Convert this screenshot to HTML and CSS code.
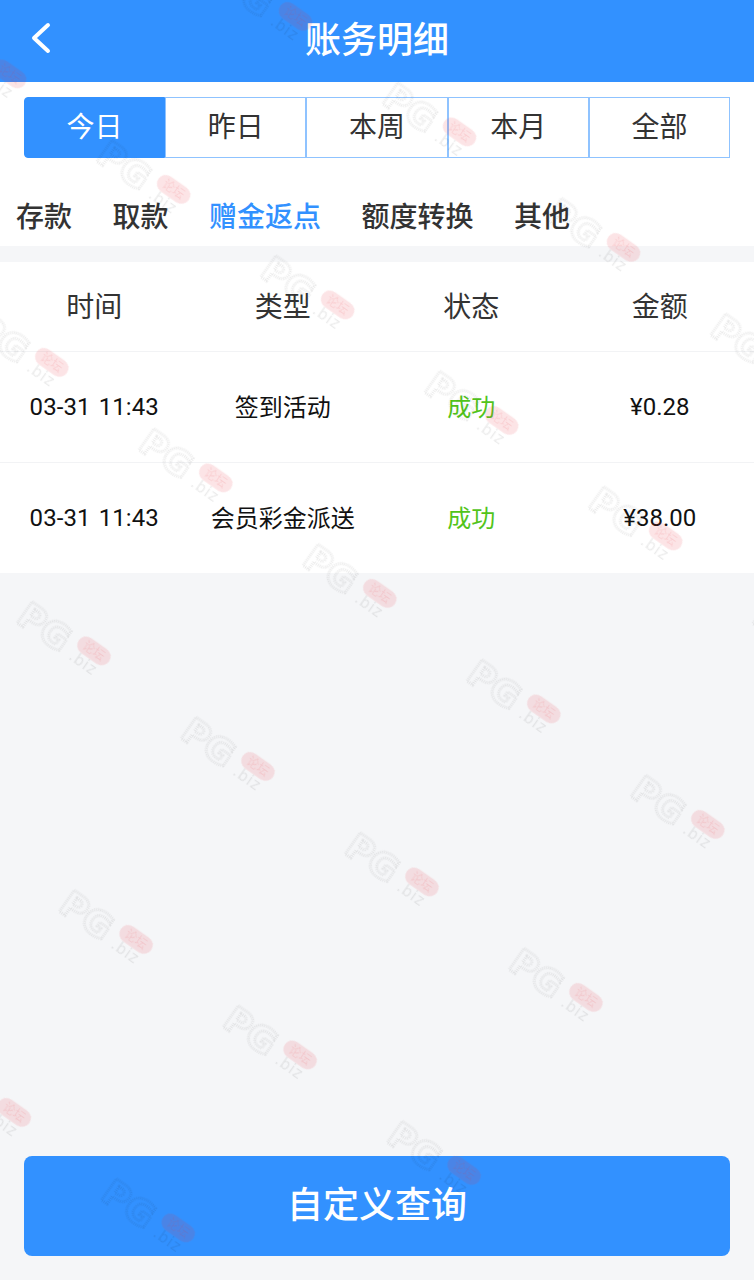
FILE: index.html
```html
<!DOCTYPE html>
<html>
<head>
    <title>账务明细</title>
    <link rel="stylesheet" href="styles.css">
</head>
<body>
    <div class="page">
        <header class="topbar">
            <a class="back">
                <svg width="24" height="34" viewBox="0 0 24 34"><path d="M18 5 L4 18 L18 31" fill="none" stroke="#fff" stroke-width="4" stroke-linecap="round" stroke-linejoin="round"/></svg>
            </a>
            <h1>账务明细</h1>
        </header>

        <div class="ranges">
            <div class="range active">今日</div>
            <div class="range">昨日</div>
            <div class="range">本周</div>
            <div class="range">本月</div>
            <div class="range">全部</div>
        </div>

        <div class="types">
            <span>存款</span>
            <span>取款</span>
            <span class="current">赠金返点</span>
            <span>额度转换</span>
            <span>其他</span>
        </div>

        <div class="table">
            <div class="row head">
                <div>时间</div>
                <div>类型</div>
                <div>状态</div>
                <div>金额</div>
            </div>
            <div class="row">
                <div class="num time">03-31 11:43</div>
                <div class="cn">签到活动</div>
                <div class="cn ok">成功</div>
                <div class="num">¥0.28</div>
            </div>
            <div class="row">
                <div class="num time">03-31 11:43</div>
                <div class="cn">会员彩金派送</div>
                <div class="cn ok">成功</div>
                <div class="num">¥38.00</div>
            </div>
        </div>

        <button class="query">自定义查询</button>
    </div>

    <!-- watermark repeated over the page, corners on the right are empty -->
    <svg class="watermark" width="754" height="1280">
        <defs>
            <pattern id="mark" patternUnits="userSpaceOnUse" width="200.6" height="211.6" patternTransform="translate(226 748) rotate(35.16) translate(-100.3 -105.8)">
                <text class="mark-pg" x="55" y="124">PG</text>
                <text class="mark-biz" x="120" y="124">.biz</text>
                <rect class="mark-pill" x="118.5" y="93.5" width="37" height="18" rx="9"/>
                <text class="mark-cn" x="137" y="107">论坛</text>
            </pattern>
        </defs>
        <rect width="754" height="1280" fill="url(#mark)"/>
    </svg>
</body>
</html>
```

FILE: styles.css
```css
* {
    box-sizing: border-box;
}
body {
    margin: 0;
    font-family: "Noto Sans CJK SC", sans-serif;
    background-color: #f5f6f8;
}
.page {
    display: flex;
    flex-direction: column;
    height: 1280px;
}
.topbar {
    display: grid;
    grid-template-columns: 1fr auto 1fr;
    align-items: center;
    height: 82px;
    padding: 0 30px 8px;
    background-color: #3291ff;
    color: white;
}
.back {
    display: flex;
}
.topbar h1 {
    margin: 0;
    font-size: 36px;
    font-weight: 500;
    line-height: 1;
}
.ranges {
    display: flex;
    padding: 15px 24px 0;
    background-color: white;
}
.range {
    flex: 1;
    height: 61px;
    padding-bottom: 6px;
    display: flex;
    align-items: center;
    justify-content: center;
    border: 1px solid #8fc3ff;
    font-size: 28px;
    color: #333;
}
.range:first-child {
    border-radius: 4px 0 0 4px;
}
.range.active {
    background-color: #3291ff;
    border-color: #3291ff;
    color: white;
}
.types {
    display: flex;
    gap: 40.5px;
    height: 88px;
    padding: 26px 16px 0;
    align-items: center;
    background-color: white;
    font-size: 28px;
    font-weight: 500;
    color: #333;
}
.types .current {
    color: #3291ff;
}
.table {
    margin-top: 16px;
    background-color: white;
}
.row {
    display: grid;
    grid-template-columns: repeat(4, 1fr);
    height: 111px;
    align-items: center;
    text-align: center;
    border-top: 1px solid #f2f3f5;
    font-size: 24px;
    color: #111;
}
.row.head {
    height: 89px;
    padding-bottom: 4px;
    border-top: none;
    font-size: 28px;
    color: #333;
}
.num {
    font-family: Roboto, sans-serif;
}
.time {
    word-spacing: 2px;
    letter-spacing: 0.1px;
}
.cn {
    padding-bottom: 4px;
}
.ok {
    color: #52c41a;
}
.query {
    margin: auto 24px 24px;
    height: 100px;
    padding-bottom: 10px;
    border: none;
    border-radius: 8px;
    background-color: #3291ff;
    color: white;
    font-family: inherit;
    font-size: 36px;
    font-weight: 500;
}
.watermark {
    position: absolute;
    top: 0;
    left: 0;
    pointer-events: none;
    clip-path: polygon(0 0, 560px 0, 754px 130px, 754px 900px, 480px 1280px, 0 1280px);
}
.mark-pg {
    font-family: "DejaVu Sans", sans-serif;
    font-size: 36px;
    font-weight: bold;
    fill: none;
    stroke: rgba(0, 0, 0, 0.08);
    stroke-width: 3;
    stroke-dasharray: 1 1;
}
.mark-biz {
    font-family: "DejaVu Sans", sans-serif;
    font-size: 15px;
    letter-spacing: 1px;
    fill: rgba(0, 0, 0, 0.08);
}
.mark-pill {
    fill: rgba(230, 50, 60, 0.13);
}
.mark-cn {
    font-size: 12px;
    text-anchor: middle;
    fill: rgba(230, 50, 60, 0.12);
}
```
